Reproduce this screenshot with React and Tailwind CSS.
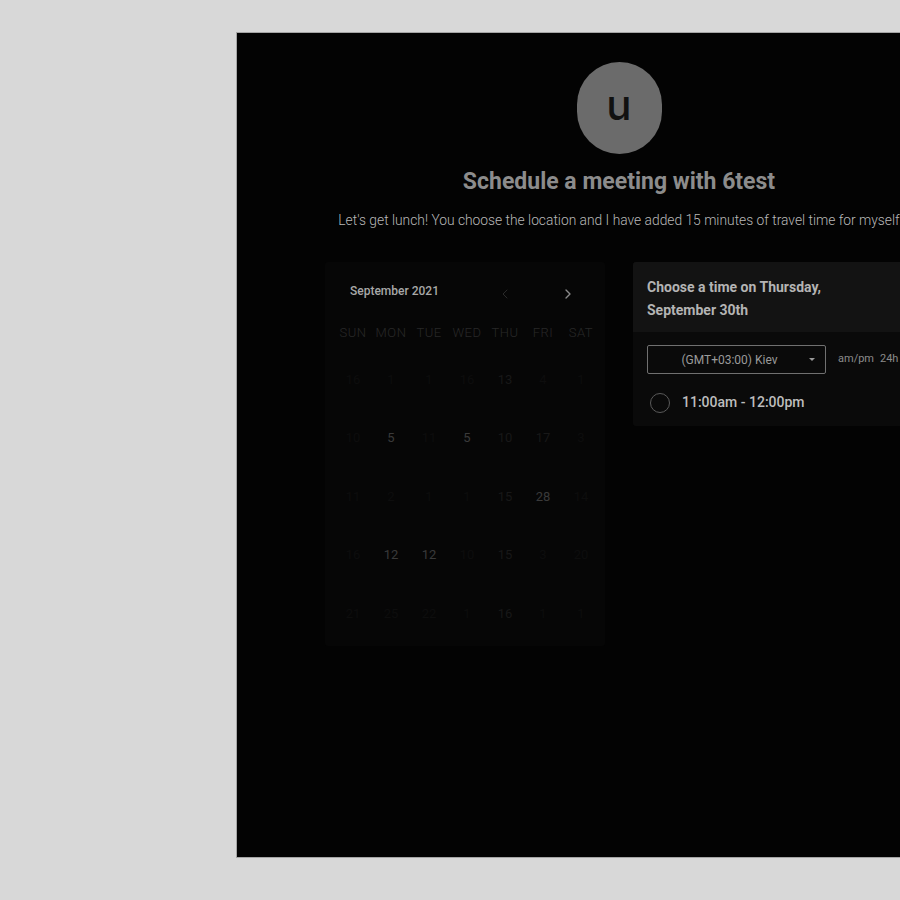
import { ChevronLeft, ChevronRight } from 'lucide-react';

const days = ['SUN', 'MON', 'TUE', 'WED', 'THU', 'FRI', 'SAT'];

// dim grid of dates as it appears in the capture (some cells slightly brighter)
const weeks = [
  [['16', 0], ['1', 0], ['1', 0], ['16', 0], ['13', 1], ['4', 0], ['1', 0]],
  [['10', 0], ['5', 2], ['11', 0], ['5', 2], ['10', 1], ['17', 1], ['3', 0]],
  [['11', 0], ['2', 0], ['1', 0], ['1', 0], ['15', 1], ['28', 2], ['14', 0]],
  [['16', 0], ['12', 2], ['12', 2], ['10', 0], ['15', 1], ['3', 0], ['20', 0]],
  [['21', 0], ['25', 0], ['22', 0], ['1', 0], ['16', 1], ['1', 0], ['1', 0]],
];

const tone = ['text-[#0d0d0d]', 'text-[#181818]', 'text-[#3a3a3a]'];

function Calendar() {
  return (
    <div className="w-[280px] h-[384px] bg-[#060606] rounded-[3px] pl-[9px] pr-[5px] shrink-0">
      <div className="flex items-center h-[56px] pt-[2px]">
        <span className="ml-[16px] text-[12px] font-medium text-[#a8a8a8]">September 2021</span>
        <ChevronLeft className="ml-[58px] w-[16px] h-[16px] text-[#2a2a2a] mt-[6px]" strokeWidth={1.5} />
        <ChevronRight className="ml-[47px] w-[16px] h-[16px] text-[#8a8a8a] mt-[6px]" strokeWidth={2} />
      </div>
      <div className="grid grid-cols-[repeat(7,38px)] h-[26px] items-center mt-[2px]">
        {days.map(d => (
          <span key={d} className="text-center text-[13px] font-light tracking-[0.5px] text-[#282828]">{d}</span>
        ))}
      </div>
      <div className="mt-[4px]">
        {weeks.map((w, i) => (
          <div key={i} className="grid grid-cols-[repeat(7,38px)] h-[58.5px] items-center">
            {w.map(([n, t], j) => (
              <span key={j} className={`text-center text-[13px] ${tone[t]}`}>{n}</span>
            ))}
          </div>
        ))}
      </div>
    </div>
  );
}

function TimePanel() {
  return (
    <div className="w-[280px] h-[164px] bg-[#0a0a0a] rounded-[3px] shrink-0 overflow-hidden">
      <div className="bg-[#131313] h-[70px] pl-[14px] pt-[14px]">
        <p className="text-[14px] leading-[23px] font-bold text-[#b4b4b4]">
          Choose a time on Thursday,<br />September 30th
        </p>
      </div>
      <div className="flex items-center pl-[14px] mt-[13px]">
        <div className="relative w-[179px] h-[29px] border border-[#707070] rounded-[2px] flex items-center justify-center">
          <span className="text-[12px] text-[#9a9a9a] -ml-[14px]">(GMT+03:00) Kiev</span>
          <span className="absolute right-[10px] top-[12px] w-0 h-0 border-l-[3px] border-r-[3px] border-t-[3px] border-l-transparent border-r-transparent border-t-[#9a9a9a]" />
        </div>
        <span className="ml-[12px] text-[11px] text-[#8a8a8a]">am/pm</span>
        <span className="ml-[6px] text-[11px] text-[#8a8a8a]">24h</span>
      </div>
      <div className="flex items-center pl-[17px] mt-[18px]">
        <span className="w-[20px] h-[20px] rounded-full border border-[#5a5a5a]" />
        <span className="ml-[12px] text-[14px] font-medium text-[#bdbdbd]">11:00am - 12:00pm</span>
      </div>
    </div>
  );
}

export default function App() {
  return (
    <div className="w-[900px] h-[900px] overflow-hidden bg-[#d8d8d8] pt-[32px] pl-[236px]" style={{ fontFamily: 'Roboto, "Liberation Sans", sans-serif' }}>
      <div className="w-[766px] h-[826px] bg-[#030303] border border-[#a5a5a5] flex flex-col items-center">
        <div className="mt-[29px] w-[85px] h-[92px] rounded-full bg-[#6b6b6b] flex items-center justify-center">
          <span className="text-[42px] font-medium leading-none text-[#111] -mt-[6px]" style={{ fontFamily: 'Inter, sans-serif' }}>u</span>
        </div>
        <h1 className="mt-[11px] text-[23px] font-bold text-[#8c8c8c]">Schedule a meeting with 6test</h1>
        <p className="mt-[10px] text-[13.8px] font-light text-[#b8b8b8] whitespace-nowrap">
          Let's get lunch! You choose the location and I have added 15 minutes of travel time for myself
        </p>
        <div className="mt-[32px] flex gap-[28px] items-start">
          <Calendar />
          <TimePanel />
        </div>
      </div>
    </div>
  );
}
